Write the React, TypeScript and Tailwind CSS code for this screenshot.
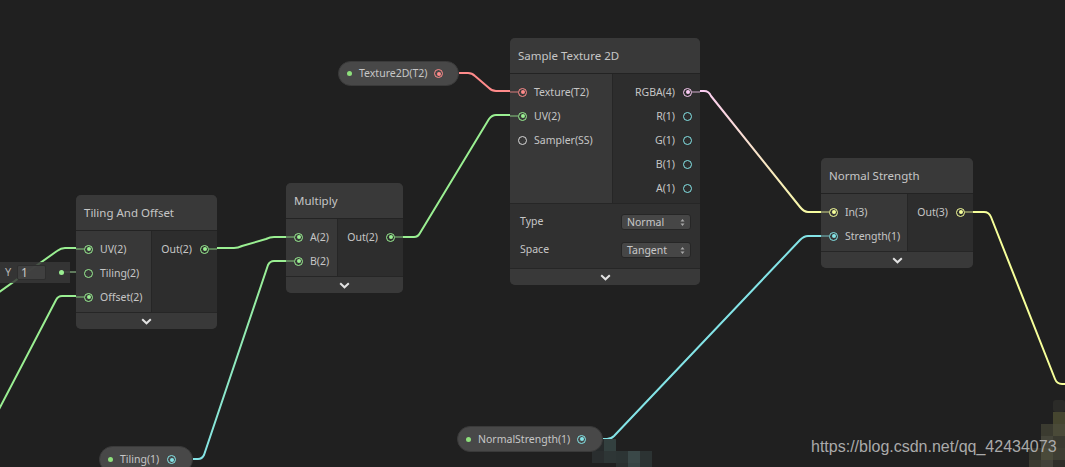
import React from "react";

const C = {
  v2: "#9aef92",
  v1: "#84e4e7",
  v3: "#f6ff9a",
  v4: "#fbcbf4",
  tex: "#ff8b8b",
  smp: "#d8d8d8",
};

type Port = { label: string; color: string; connected?: boolean };

function Dot({ color, connected }: { color: string; connected?: boolean }) {
  return (
    <span
      className="flex h-[9px] w-[9px] shrink-0 items-center justify-center rounded-full border-[1.5px]"
      style={{ borderColor: color }}
    >
      {connected ? <span className="h-[4px] w-[4px] rounded-full" style={{ background: color }} /> : null}
    </span>
  );
}

function Stub({ color, on }: { color: string; on?: boolean }) {
  return (
    <span className="flex h-[2px] w-[8px] shrink-0">
      {on ? <span className="h-[2px] w-full opacity-40" style={{ background: color }} /> : null}
    </span>
  );
}

function Chevron() {
  return (
    <svg width="11" height="7" viewBox="0 0 11 7">
      <path d="M1.2 1.2 L5.5 5.3 L9.8 1.2" fill="none" stroke="#e2e2e2" strokeWidth="2" />
    </svg>
  );
}

function Node({
  x,
  y,
  w,
  split,
  title,
  inputs,
  outputs,
  children,
}: {
  x: number;
  y: number;
  w: number;
  split: number;
  title: string;
  inputs: Port[];
  outputs: Port[];
  children?: React.ReactNode;
}) {
  return (
    <div
      className="absolute flex flex-col overflow-hidden rounded-[5px] bg-[#2d2d2d] text-[#c6c6c6]"
      style={{ left: x, top: y, width: w, fontFamily: '"Noto Sans", sans-serif' }}
    >
      <div className="flex h-[36px] items-center border-b border-[#232323] bg-[#393939] pl-[8px] text-[11.5px]">
        {title}
      </div>
      <div className="flex text-[10.5px]">
        <div className="flex flex-col border-r border-[#262626] bg-[#383838] pb-[3px] pt-[6px]" style={{ width: split }}>
          {inputs.map((p) => (
            <div key={p.label} className="flex h-[24px] items-center">
              <Stub color={p.color} on={p.connected} />
              <Dot color={p.color} connected={p.connected} />
              <span className="ml-[7px] leading-none">{p.label}</span>
            </div>
          ))}
        </div>
        <div className="flex flex-1 flex-col bg-[#2d2d2d] pb-[3px] pt-[6px]">
          {outputs.map((p) => (
            <div key={p.label} className="flex h-[24px] items-center justify-end">
              <span className="mr-[8px] leading-none">{p.label}</span>
              <Dot color={p.color} connected={p.connected} />
              <Stub color={p.color} on={p.connected} />
            </div>
          ))}
        </div>
      </div>
      {children}
      <div className="flex h-[17px] items-center justify-center border-t border-[#262626] bg-[#393939]">
        <Chevron />
      </div>
    </div>
  );
}

function Select({ value }: { value: string }) {
  return (
    <div className="flex h-[16px] w-[70px] items-center justify-between rounded-[3px] border border-[#262626] bg-[#464646] pl-[5px] pr-[5px] text-[10.5px] text-[#c8c8c8]">
      <span className="leading-none">{value}</span>
      <svg width="5" height="9" viewBox="0 0 5 9">
        <path d="M0.5 3.5 L2.5 1 L4.5 3.5 Z M0.5 5.5 L2.5 8 L4.5 5.5 Z" fill="#a8a8a8" />
      </svg>
    </div>
  );
}

function Pill({
  x,
  y,
  w,
  h,
  label,
  color,
  pr,
}: {
  x: number;
  y: number;
  w: number;
  h: number;
  label: string;
  color: string;
  pr: number;
}) {
  return (
    <div
      className="absolute flex items-center rounded-full border border-[#3a3a3a] bg-[#484848] pl-[8px] text-[10.5px] text-[#c6c6c6]"
      style={{ left: x, top: y, width: w, height: h, paddingRight: pr, fontFamily: '"Noto Sans", sans-serif' }}
    >
      <span className="h-[5px] w-[5px] shrink-0 rounded-full bg-[#8ee07c]" />
      <span className="ml-[7px] flex-1 leading-none">{label}</span>
      <Dot color={color} connected />
    </div>
  );
}

export default function App() {
  return (
    <div className="relative h-[467px] w-[1065px] overflow-hidden bg-[#202020]">
      <svg className="absolute left-0 top-0" width="1065" height="467" viewBox="0 0 1065 467">
        <defs>
          <linearGradient id="pk" gradientUnits="userSpaceOnUse" x1="700" y1="0" x2="821" y2="0">
            <stop offset="0" stopColor={C.v4} />
            <stop offset="1" stopColor={C.v3} />
          </linearGradient>
          <linearGradient id="cg" gradientUnits="userSpaceOnUse" x1="0" y1="459" x2="0" y2="261">
            <stop offset="0" stopColor={C.v1} />
            <stop offset="1" stopColor={C.v2} />
          </linearGradient>
        </defs>
        <g fill="none" strokeWidth="2" strokeLinejoin="round">
          <path d="M459 73 L468 73 Q472 73 475 76 L489 88 Q492 91 496 91 L510 91" stroke={C.tex} />
          <path d="M403 237 L414 237 Q418 237 420 233 L489 119 Q492 115 496 115 L510 115" stroke={C.v2} />
          <path d="M700 91 L704 91 Q709 91 711 96 L800 207 Q804 212 808 212 L821 212" stroke="url(#pk)" />
          <path d="M603 439 L607 439 Q611 439 614 436 L800 240 Q804 236 808 236 L821 236" stroke={C.v1} />
          <path d="M973 212 L984 212 Q989 212 991 217 L1055 379 Q1057 384 1062 384 L1070 384" stroke={C.v3} />
          <path d="M217 248 L234 248 Q238 248 242 246 L266 239 Q270 237 274 237 L286 237" stroke={C.v2} />
          <path d="M193 459 L198 459 Q202 459 204 455 L268 265 Q270 261 274 261 L286 261" stroke="url(#cg)" />
          <path d="M-5 295 L57 251 Q61 248 65 248 L76 248" stroke={C.v2} />
          <path d="M-5 417 L56 300 Q58 296 62 296 L76 296" stroke={C.v2} />
          <path d="M61 272 L76 272" stroke="#5f7a5c" />
        </g>
        <g>
          <rect x="1053" y="400" width="12" height="12" rx="3" fill="#2b2b28" />
          <rect x="1053" y="412" width="12" height="12" fill="#45452f" />
          <rect x="1041" y="424" width="12" height="12" fill="#3b3b30" />
          <rect x="1053" y="424" width="12" height="12" fill="#4a4a38" />
          <rect x="1041" y="436" width="12" height="12" fill="#45453a" />
          <rect x="1053" y="436" width="12" height="12" fill="#3a3a30" />
          <rect x="1029" y="448" width="12" height="12" fill="#34342c" />
          <rect x="1041" y="448" width="12" height="12" fill="#4a4a3a" />
          <rect x="1053" y="448" width="12" height="12" fill="#3e3e33" />
          <rect x="1029" y="460" width="12" height="7" fill="#3a3a30" />
          <rect x="1041" y="460" width="12" height="7" fill="#42423a" />
          <rect x="1053" y="460" width="12" height="7" fill="#2e2e29" />

          <rect x="592" y="439" width="12" height="12" fill="#262a2b" />
          <rect x="604" y="439" width="12" height="12" fill="#33403f" />
          <rect x="592" y="451" width="12" height="12" fill="#2a2e2f" />
          <rect x="604" y="451" width="12" height="12" fill="#2e3636" />
          <rect x="616" y="451" width="12" height="12" fill="#2c3434" />
          <rect x="628" y="451" width="12" height="12" fill="#3a4848" />
          <rect x="640" y="451" width="12" height="12" fill="#2c3333" />
          <rect x="616" y="463" width="12" height="4" fill="#2a3030" />
          <rect x="628" y="463" width="12" height="4" fill="#364444" />
          <rect x="640" y="463" width="12" height="4" fill="#2b3333" />
        </g>
      </svg>

      {/* Y input field */}
      <div
        className="absolute flex h-[21px] w-[70px] items-center bg-[#383838]/85 text-[11px] text-[#b4b4b4]"
        style={{ left: 0, top: 262, fontFamily: '"Noto Sans", sans-serif' }}
      >
        <span className="ml-[5px] w-[12px]">Y</span>
        <span className="flex h-[15px] w-[29px] items-center rounded-[2px] border border-[#2e2e2e] bg-[#414141]/90 pl-[3px] text-[12px] text-[#c8c8c8]">
          1
        </span>
        <span className="ml-[13px] h-[5px] w-[5px] rounded-full bg-[#9aef92]" />
      </div>

      <Node
        x={76}
        y={195}
        w={141}
        split={76}
        title="Tiling And Offset"
        inputs={[
          { label: "UV(2)", color: C.v2, connected: true },
          { label: "Tiling(2)", color: C.v2 },
          { label: "Offset(2)", color: C.v2, connected: true },
        ]}
        outputs={[{ label: "Out(2)", color: C.v2, connected: true }]}
      />

      <Node
        x={286}
        y={183}
        w={117}
        split={52}
        title="Multiply"
        inputs={[
          { label: "A(2)", color: C.v2, connected: true },
          { label: "B(2)", color: C.v2, connected: true },
        ]}
        outputs={[{ label: "Out(2)", color: C.v2, connected: true }]}
      />

      <Node
        x={510}
        y={38}
        w={190}
        split={103}
        title="Sample Texture 2D"
        inputs={[
          { label: "Texture(T2)", color: C.tex, connected: true },
          { label: "UV(2)", color: C.v2, connected: true },
          { label: "Sampler(SS)", color: C.smp },
        ]}
        outputs={[
          { label: "RGBA(4)", color: C.v4, connected: true },
          { label: "R(1)", color: C.v1 },
          { label: "G(1)", color: C.v1 },
          { label: "B(1)", color: C.v1 },
          { label: "A(1)", color: C.v1 },
        ]}
      >
        <div className="flex flex-col border-t border-[#262626] bg-[#303030] pb-[4px] pl-[10px] pr-[9px] pt-[4px] text-[10.5px]">
          <div className="flex h-[28px] items-center justify-between">
            <span>Type</span>
            <Select value="Normal" />
          </div>
          <div className="flex h-[28px] items-center justify-between">
            <span>Space</span>
            <Select value="Tangent" />
          </div>
        </div>
      </Node>

      <Node
        x={821}
        y={158}
        w={152}
        split={87}
        title="Normal Strength"
        inputs={[
          { label: "In(3)", color: C.v3, connected: true },
          { label: "Strength(1)", color: C.v1, connected: true },
        ]}
        outputs={[{ label: "Out(3)", color: C.v3, connected: true }]}
      />

      <Pill x={338} y={61} w={121} h={25} label="Texture2D(T2)" color={C.tex} pr={15} />
      <Pill x={457} y={426} w={146} h={26} label="NormalStrength(1)" color={C.v1} pr={16} />
      <Pill x={99} y={446} w={94} h={27} label="Tiling(1)" color={C.v1} pr={16} />

      <div
        className="absolute text-[16px] leading-none text-[#aaaaaa]"
        style={{ left: 811, top: 439, fontFamily: '"Liberation Sans", Arial, sans-serif' }}
      >
        https://blog.csdn.net/qq_42434073
      </div>
    </div>
  );
}
